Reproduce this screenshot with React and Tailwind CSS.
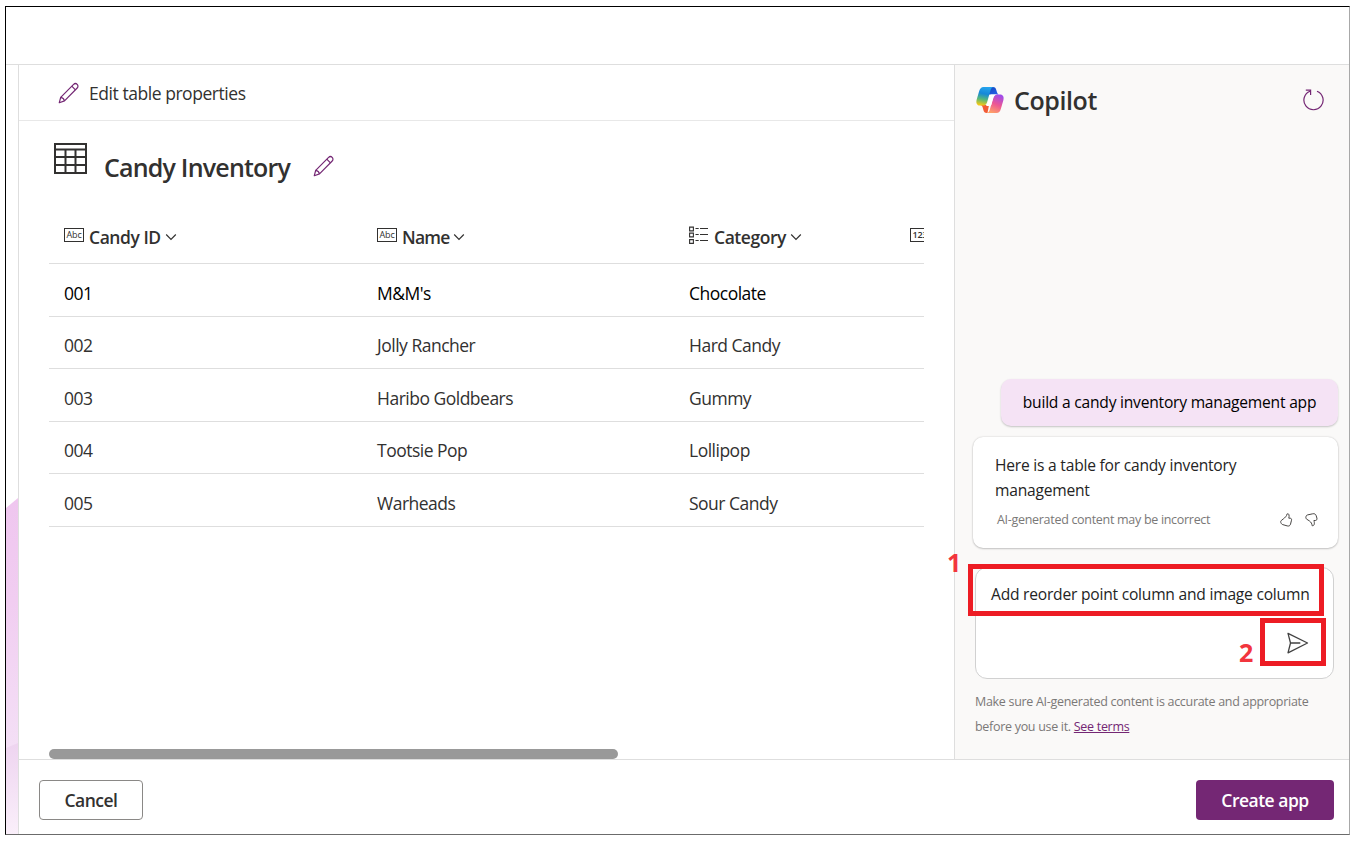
const rows = [
  ["001", "M&M's", "Chocolate"],
  ["002", "Jolly Rancher", "Hard Candy"],
  ["003", "Haribo Goldbears", "Gummy"],
  ["004", "Tootsie Pop", "Lollipop"],
  ["005", "Warheads", "Sour Candy"],
];

function Pencil({ className }) {
  return (
    <svg className={className} width="22" height="22" viewBox="0 0 22 22" fill="none" stroke="#742774" strokeWidth="1.2" strokeLinejoin="round">
      <path d="M1.3 20.7 2.7 15.3 15.6 2.4c1-1 2.6-1 3.6 0s1 2.6 0 3.6L6.5 18.9z" />
      <path d="M2.7 15.3c1.9.2 3.4 1.6 3.8 3.6M13.8 4.2l3.6 3.6" />
    </svg>
  );
}

function Chevron() {
  return (
    <svg className="-mt-px ml-1" width="12" height="12" viewBox="0 0 12 12" fill="none" stroke="#323130" strokeWidth="1.2">
      <path d="m1.2 3.5 4.8 4.8 4.8-4.8" />
    </svg>
  );
}

function TypeBox({ label, className }) {
  return (
    <span className="-mt-[6px] flex h-[14px] w-5 shrink-0 items-center justify-center border border-[#323130]">
      <span className={`leading-none ${className}`}>{label}</span>
    </span>
  );
}

function ChoiceIcon() {
  return (
    <svg className="-mt-[5px]" width="20" height="19" viewBox="0 0 20 19" fill="none" stroke="#323130" strokeWidth="1.1">
      <path d="M.6 1.1h3.8v3.8H.6zM.6 7.1h3.8v3.8H.6zM.6 13.6h3.8v3.8H.6zM6.5 2.5h3.2M11 2.5h8M6.5 8.5h3.2M11 8.5h8M6.5 14.5h3.2M11 14.5h8" />
    </svg>
  );
}

function CopilotLogo() {
  return (
    <svg width="30" height="28" viewBox="0 0 30 28">
      <defs>
        <linearGradient id="cool" x1=".6" y1="0" x2=".4" y2="1">
          <stop offset="0" stopColor="#25a5ee" />
          <stop offset=".38" stopColor="#1688d8" />
          <stop offset=".68" stopColor="#55b87c" />
          <stop offset="1" stopColor="#f4c914" />
        </linearGradient>
        <linearGradient id="warm" x1=".7" y1="0" x2=".3" y2="1">
          <stop offset="0" stopColor="#a04bea" />
          <stop offset=".5" stopColor="#ec5694" />
          <stop offset="1" stopColor="#ffa367" />
        </linearGradient>
        <linearGradient id="blue" x1="0" y1="0" x2="1" y2="1">
          <stop offset="0" stopColor="#1248bd" />
          <stop offset="1" stopColor="#2964ef" />
        </linearGradient>
      </defs>
      <path fill="url(#blue)" d="M15 1h3c2 0 2.8 1.2 3.3 3l.7 2.2c.5 1.6 1.2 2.3 2.7 2.3H13z" />
      <path fill="#f25b36" d="M5 19h9l-1.5 8h-.8c-2 0-2.8-1.2-3.3-3l-.7-2.5c-.4-1.5-1-2.3-2.7-2.5z" />
      <path fill="url(#cool)" d="M8.6 1H19c-2 0-3 1.6-3.7 4l-2.8 9.7c-.8 2.8-1.6 4.9-4.4 4.9H5C1.9 19.6.7 17 1.7 13.5l2.5-8.4C4.9 2.7 6.1 1 8.6 1z" />
      <path fill="url(#warm)" d="M21.4 27H11.3c2 0 3-1.6 3.7-4l2.7-9.7c.8-2.8 1.6-4.7 4.4-4.7H25c3.1 0 4.3 2.4 3.3 5.9l-2.5 8.4C25.1 25.3 23.9 27 21.4 27z" />
      <path fill="#fff" d="M16.2 8.6h5.9c-2.2.2-3.2 1.8-4.1 4.7l-1.6 5.5c-.3.9-1 1.2-2 1.2h-3.5c1-.9 1.6-2.4 2.1-4.3l1.5-5.3c.3-1.1.8-1.8 1.7-1.8z" />
    </svg>
  );
}

function ThumbUp() {
  return (
    <svg width="13" height="14" viewBox="0 0 13 14" fill="none" stroke="#484644" strokeWidth="1" strokeLinejoin="round">
      <path d="M7.1.9C6.7 3.1 5 4.7 3.2 6L1.3 7.5C.6 8.1.5 8.9.9 9.7l.5.9c.3.6.7.8 1.3 1l4.5 1.3c1.6.5 2.9-.2 3.3-1.7l1-4c.3-1.2-.3-2-1.5-2H8.8c.3-1.3.5-2.7.1-3.6C8.6.9 8 .6 7.1.9z" />
    </svg>
  );
}

function ThumbDown() {
  return (
    <svg width="13" height="14" viewBox="0 0 13 14" fill="none" stroke="#484644" strokeWidth="1" strokeLinejoin="round">
      <path d="M7 12.6c.1-1.8-.9-3.4-2.5-4.6L1.9 6.3C1 5.7.7 5 .9 4.1l.2-.8c.2-.8.7-1.2 1.5-1.4L7.7.8c1.7-.4 3 .3 3.5 1.9l.7 2.4c.4 1.3-.3 2.4-1.6 2.4H8.9c.4 1.5.7 3 .2 4.2-.4.9-1.1 1.2-2.1.9z" />
    </svg>
  );
}

export default function App() {
  return (
    <div className="h-[841px] w-[1353px] overflow-hidden bg-white pl-[5px] pt-[6px] font-['Open_Sans',sans-serif] text-[#323130]">
      <div className="flex h-[829px] w-[1345px] flex-col border-y border-l border-r border-t-black border-l-black border-r-[#a8a8a8] border-b-[#6b6b6b]">
        <header className="h-[58px] shrink-0 border-b border-[#dedede]" />
        <div className="flex min-h-0 flex-1">
          <aside className="w-3 shrink-0">
            <svg width="12" height="769" viewBox="0 0 12 769">
              <defs>
                <linearGradient id="petal" x1="0" y1="0" x2="0" y2="1">
                  <stop offset="0" stopColor="#efc6ef" />
                  <stop offset=".4" stopColor="#f1cdf1" />
                  <stop offset="1" stopColor="#f4e0f6" />
                </linearGradient>
                <linearGradient id="base" x1="0" y1="0" x2="0" y2="1">
                  <stop offset="0" stopColor="#eed4f0" />
                  <stop offset="1" stopColor="#faeffa" />
                </linearGradient>
              </defs>
              <path fill="url(#petal)" d="M0 443 12 433V688H0z" />
              <path fill="url(#base)" d="M0 683 12 678V769H0z" />
            </svg>
          </aside>
          <div className="flex min-w-0 flex-1 flex-col border-l border-[#dedede]">
            <div className="flex h-[694px] shrink-0">
              <main className="w-[935px] shrink-0">
                <div className="flex h-14 items-center border-b border-[#e8e8e8] pl-[39px]">
                  <Pencil />
                  <span className="ml-[9px] mt-px text-[17.5px] tracking-[-0.45px]">Edit table properties</span>
                </div>
                <div className="flex h-[84px] pl-[35px]">
                  <svg className="mt-[22px]" width="33" height="31" viewBox="0 0 33 31" fill="none" stroke="#323130" strokeWidth="2">
                    <path d="M1 1h31v29H1zM1 6.5h31M1 14h31M1 22h31M11.5 6v24M21.5 6v24" />
                  </svg>
                  <h1 className="ml-[17px] mt-[28px] w-[187px] whitespace-nowrap text-[25px] font-semibold leading-9 tracking-[-0.8px]">Candy Inventory</h1>
                  <Pencil className="ml-[22px] mt-[34px]" />
                </div>
                <div className="ml-[30px] w-[875px] overflow-hidden">
                  <div className="grid h-[59px] w-[875px] grid-cols-[313px_312px_221px_29px] items-center border-b border-[#dedede] pt-[7px] text-[17.5px] font-semibold tracking-[-0.45px]">
                    <div className="flex items-center pl-[15px]"><TypeBox label="Abc" className="text-[9px] font-normal tracking-[-0.1px]" /><span className="ml-[5px]">Candy ID</span><Chevron /></div>
                    <div className="flex items-center pl-[15px]"><TypeBox label="Abc" className="text-[9px] font-normal tracking-[-0.1px]" /><span className="ml-[5px] tracking-[-0.8px]">Name</span><Chevron /></div>
                    <div className="flex items-center pl-[15px]"><ChoiceIcon /><span className="ml-[5px]">Category</span><Chevron /></div>
                    <div className="flex pl-[15px]"><TypeBox label="123" className="text-[9px] tracking-[-0.2px]" /></div>
                  </div>
                  {rows.map((r, i) => (
                    <div key={r[0]} className={`grid h-[52.6px] w-[875px] grid-cols-[313px_312px_221px_29px] items-center border-b border-[#dedede] pt-[6px] text-[17.5px] tracking-[-0.5px] ${i === 0 ? "text-black" : ""}`}>
                      {r.map((cell) => <div key={cell} className="pl-[15px]">{cell}</div>)}
                    </div>
                  ))}
                </div>
                <div className="ml-[30px] mt-[222px] h-[10px] w-[569px] rounded-full bg-[#999]" />
              </main>
              <section className="flex min-w-0 flex-1 flex-col border-l border-[#dedede] bg-[#faf9f8]">
                <div className="flex items-start pl-5 pt-[21px]">
                  <CopilotLogo />
                  <h2 className="ml-[9px] -mt-[4px] text-[25px] font-semibold leading-9 tracking-[-0.4px]">Copilot</h2>
                  <svg className="ml-auto mr-6 mt-px" width="22" height="24" viewBox="0 0 22 24" fill="none" stroke="#742774" strokeWidth="1.2">
                    <path d="M14 4.2a9.6 9.6 0 1 1-7 0M2.8 3.2h4.8V8" />
                  </svg>
                </div>
                <div className="ml-[46px] mt-[261px] flex h-[47px] w-[337px] shrink-0 items-center justify-center rounded-[10px] bg-[#f5e3f5] text-[15.6px] tracking-[-0.22px] text-black shadow-[0_1px_2px_rgba(0,0,0,.22)]">
                  <span className="whitespace-nowrap">build a candy inventory management app</span>
                </div>
                <div className="ml-[18px] mt-[11px] h-[111px] w-[365px] shrink-0 rounded-[10px] bg-white pl-[22px] pt-4 shadow-[0_0_2px_rgba(0,0,0,.18),0_1px_2px_rgba(0,0,0,.18)]">
                  <p className="text-[15.6px] leading-[25px] tracking-[-0.22px] text-[#242424]">Here is a table for candy inventory<br />management</p>
                  <div className="mt-[7px] flex items-center pl-[2px] pr-5 text-[12.5px] leading-5 tracking-[-0.3px] text-[#7a7877]">
                    <span className="mr-auto">AI-generated content may be incorrect</span>
                    <ThumbUp /><span className="w-3" /><ThumbDown />
                  </div>
                </div>
                <div className="relative ml-5 mt-[19px] h-[112px] w-[359px] shrink-0 rounded-xl border border-[#d1d1d1] bg-white">
                  <p className="whitespace-nowrap pl-[15px] pt-[14px] text-[15.6px] leading-[25px] tracking-[-0.22px] text-[#242424]">Add reorder point column and image column</p>
                  <svg className="ml-[311px] mt-[25px]" width="22" height="22" viewBox="0 0 22 22" fill="none" stroke="#424242" strokeWidth="1.3" strokeLinejoin="round">
                    <path d="M1 1.3 20.5 11 1 20.8 3.5 11zM3.5 11h9.8" />
                  </svg>
                  <div className="absolute -left-[8px] -top-[4px] h-[52px] w-[356px] border-[5px] border-[#ed1c24]" />
                  <div className="absolute left-[284px] top-[50px] h-[48px] w-[66px] border-[5px] border-[#ed1c24]" />
                  <span className="absolute -left-[29px] -top-[22px] text-[25px] font-bold leading-8 text-[#f2353d]">1</span>
                  <span className="absolute left-[263px] top-[68px] text-[25px] font-bold leading-8 text-[#f2353d]">2</span>
                </div>
                <p className="ml-5 mt-[10px] whitespace-nowrap text-[12.5px] leading-[25px] tracking-[-0.3px] text-[#7a7877]">
                  Make sure AI-generated content is accurate and appropriate<br />before you use it. <a className="text-[#742774] underline">See terms</a>
                </p>
              </section>
            </div>
            <footer className="flex flex-1 items-start justify-between border-t border-[#dedede] pl-5 pr-[15px] pt-5 text-[17.5px] font-semibold">
              <button className="h-10 w-[104px] rounded-sm border border-[#8a8886] tracking-[-0.5px]">Cancel</button>
              <button className="h-10 w-[138px] rounded-sm bg-[#742774] tracking-[-0.5px] text-white">Create app</button>
            </footer>
          </div>
        </div>
      </div>
    </div>
  );
}
